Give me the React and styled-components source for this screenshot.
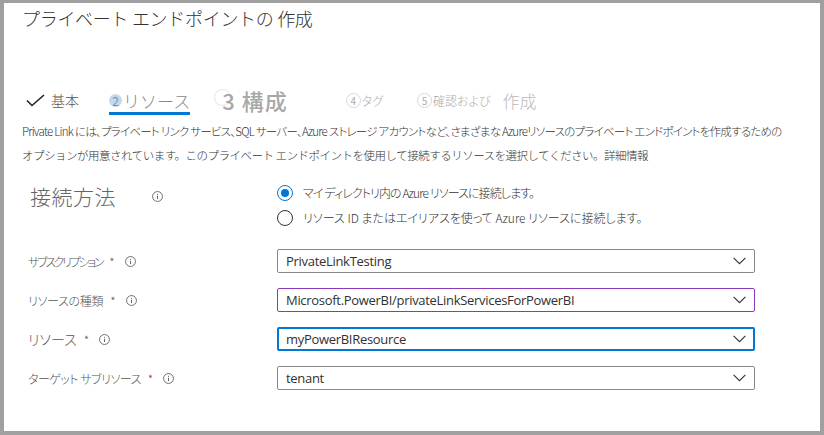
import React from "react";
import styled, { createGlobalStyle } from "styled-components";

const GlobalStyle = createGlobalStyle`
  html, body {
    margin: 0;
    padding: 0;
    background: #a0a0a0;
  }
  body {
    font-family: "Noto Sans CJK JP", "Noto Sans", sans-serif;
  }
`;

const STEPS_LATER = [
  { num: "4", label: "タグ", gapAfter: 34 },
  { num: "5", label: "確認および", gapAfter: 12 },
];

const FIELDS = [
  { label: "サブスクリプション", value: "PrivateLinkTesting", tone: "plain", spacing: -2.3 },
  { label: "リソースの種類", value: "Microsoft.PowerBI/privateLinkServicesForPowerBI", tone: "purple", spacing: -0.3 },
  { label: "リソース", value: "myPowerBIResource", tone: "focus", spacing: 0, size: 14 },
  { label: "ターゲット サブリソース", value: "tenant", tone: "plain", spacing: -0.5, redStar: true },
];

const InfoIcon = ({ size = 11 }) => (
  <svg width={size} height={size} viewBox="0 0 12 12">
    <circle cx="6" cy="6" r="5.4" fill="none" stroke="#555" strokeWidth="0.9" />
    <circle cx="6" cy="3.6" r="0.6" fill="#555" />
    <path d="M6 5.2 V8.8" stroke="#555" strokeWidth="1" />
  </svg>
);

const Chevron = () => (
  <svg width="13" height="8" viewBox="0 0 13 8">
    <path d="M0.6 0.8 L6.5 6.7 L12.4 0.8" fill="none" stroke="#333" strokeWidth="1.1" />
  </svg>
);

const App = () => {
  return (
    <>
      <GlobalStyle />
      <Frame>
        <Panel>
          <Title>プライベート エンドポイントの 作成</Title>

          <Steps>
            <Step>
              <svg width="19" height="13" viewBox="0 0 19 13">
                <path d="M1 6.5 L6 11.5 L18 1" fill="none" stroke="#222" strokeWidth="1.6" />
              </svg>
              <StepText>基本</StepText>
            </Step>
            <ActiveStep>
              <FilledNum>2</FilledNum>
              <StepText $color="#8a8a8a" $size={17}>リソース</StepText>
            </ActiveStep>
            <BigStep>
              <RingNum />
              <BigLabel>3 構成</BigLabel>
            </BigStep>
            {STEPS_LATER.map((s) => (
              <Step key={s.num} $gap={0} $after={s.gapAfter}>
                <RingSmall>{s.num}</RingSmall>
                <StepText $color="#aaa" $size={12} $palt>{s.label}</StepText>
              </Step>
            ))}
            <StepText $color="#bbb" $size={17}>作成</StepText>
          </Steps>

          <Description>
            <DescLine $palt $spacing={-0.75}>
              Private Link には、プライベート リンク サービス、SQL サーバー、Azure ストレージ アカウントなど、さまざまな Azureリソースのプライベート エンドポイントを作成するための
            </DescLine>
            <DescLine $spacing={-0.5}>
              オプションが用意されています。このプライベート エンドポイントを使用して接続するリソースを選択してください。詳細情報
            </DescLine>
          </Description>

          <MethodRow>
            <MethodLabel>
              <span>接続方法</span>
              <InfoIcon />
            </MethodLabel>
            <RadioGroup>
              <RadioOption $spacing={-0.9}>
                <Radio $checked />
                <span>マイ ディレクトリ内の Azure リソースに接続します。</span>
              </RadioOption>
              <RadioOption>
                <Radio />
                <span>リソース ID またはエイリアスを使って Azure リソースに接続します。</span>
              </RadioOption>
            </RadioGroup>
          </MethodRow>

          <Form>
            {FIELDS.map((f) => (
              <FieldRow key={f.label}>
                <FieldLabel>
                  <LabelText $spacing={f.spacing} $size={f.size}>{f.label}</LabelText>
                  <Star $red={f.redStar}>*</Star>
                  <InfoIcon />
                </FieldLabel>
                <Select $tone={f.tone}>
                  <span>{f.value}</span>
                  <Chevron />
                </Select>
              </FieldRow>
            ))}
          </Form>
        </Panel>
      </Frame>
    </>
  );
};

const Frame = styled.div`
  width: 824px;
  height: 435px;
  box-sizing: border-box;
  padding: 3px 4px 4px 4px;
  background: #a0a0a0;
`;

const Panel = styled.div`
  height: 100%;
  box-sizing: border-box;
  background: #fff;
  padding: 0 0 0 18px;
  overflow: hidden;
`;

const Title = styled.h1`
  margin: 0;
  font-size: 18px;
  font-weight: 300;
  line-height: 30px;
  color: #333;
  letter-spacing: -0.3px;
`;

const Steps = styled.div`
  display: flex;
  align-items: center;
  height: 30px;
  margin-top: 52px;
  padding-left: 4px;
`;

const Step = styled.div`
  display: flex;
  align-items: center;
  gap: ${(p) => (p.$gap ?? 6)}px;
  margin-right: ${(p) => (p.$after ?? 30)}px;
`;

const ActiveStep = styled.div`
  display: flex;
  align-items: center;
  height: 28px;
  box-sizing: border-box;
  padding-top: 1px;
  border-bottom: 3px solid #0078d4;
  margin-right: 24px;
  margin-top: 2px;
`;

const StepText = styled.span`
  font-size: ${(p) => p.$size || 14}px;
  font-weight: 300;
  color: ${(p) => p.$color || "#555"};
  white-space: nowrap;
  font-feature-settings: ${(p) => (p.$palt ? '"palt"' : "normal")};
`;

const FilledNum = styled.span`
  width: 13px;
  height: 13px;
  border-radius: 50%;
  background: #c3d9ef;
  color: #7f8fa0;
  font-size: 12px;
  line-height: 13px;
  text-align: center;
  margin-right: 1px;
`;

const BigStep = styled.div`
  display: flex;
  align-items: center;
  margin-right: 58px;
`;

const RingNum = styled.span`
  width: 15px;
  height: 15px;
  border-radius: 50%;
  border: 1px solid #e4e4e4;
  margin-top: -6px;
`;

const BigLabel = styled.span`
  margin-left: -9px;
  font-size: 22px;
  font-weight: 500;
  color: #a8a8a8;
  letter-spacing: 1px;
  white-space: nowrap;
`;

const RingSmall = styled.span`
  width: 13px;
  height: 13px;
  border-radius: 50%;
  border: 1px solid #d8d8d8;
  font-size: 10px;
  line-height: 13px;
  text-align: center;
  color: #aaa;
  margin-right: 1px;
`;

const Description = styled.div`
  margin-top: 4px;
  display: flex;
  flex-direction: column;
`;

const DescLine = styled.span`
  font-size: 11.5px;
  line-height: 24px;
  color: #333;
  font-weight: 300;
  letter-spacing: ${(p) => p.$spacing}px;
  white-space: nowrap;
  font-feature-settings: ${(p) => (p.$palt ? '"palt"' : "normal")};
`;

const MethodRow = styled.div`
  display: grid;
  grid-template-columns: 255px 1fr;
  margin-top: 13px;
`;

const MethodLabel = styled.div`
  display: flex;
  align-items: center;
  height: 32px;
  padding-left: 8px;
  gap: 36px;

  span {
    font-size: 21px;
    font-weight: 300;
    color: #666;
    letter-spacing: 0.5px;
  }
`;

const RadioGroup = styled.div`
  display: flex;
  flex-direction: column;
`;

const RadioOption = styled.label`
  display: flex;
  align-items: center;
  height: 25px;
  gap: 10px;
  font-size: 12px;
  font-weight: 300;
  color: #333;
  white-space: nowrap;
  font-feature-settings: "palt";
  letter-spacing: ${(p) => p.$spacing ?? 0}px;
`;

const Radio = styled.span`
  width: 16px;
  height: 16px;
  box-sizing: border-box;
  border-radius: 50%;
  border: 1px solid ${(p) => (p.$checked ? "#0078d4" : "#333")};
  display: flex;
  align-items: center;
  justify-content: center;

  &::after {
    content: "";
    width: 8px;
    height: 8px;
    border-radius: 50%;
    background: ${(p) => (p.$checked ? "#0078d4" : "transparent")};
  }
`;

const Form = styled.div`
  display: flex;
  flex-direction: column;
  gap: 15px;
  margin-top: 19px;
`;

const FieldRow = styled.div`
  display: grid;
  grid-template-columns: 255px 478px;
  align-items: center;
`;

const FieldLabel = styled.div`
  display: flex;
  align-items: center;
  padding-left: 6px;
  font-size: 12px;
  font-weight: 300;
  color: #555;
  white-space: nowrap;
  font-feature-settings: "palt";

  svg {
    margin-left: 10px;
  }
`;

const LabelText = styled.span`
  font-size: ${(p) => p.$size || 12}px;
  letter-spacing: ${(p) => p.$spacing}px;
`;

const Star = styled.span`
  margin-left: 7px;
  color: ${(p) => (p.$red ? "#a4262c" : "#555")};
`;

const toneBorder = {
  plain: "1px solid #8a8886",
  purple: "1px solid #8a3ab9",
  focus: "2px solid #0078d4",
};

const Select = styled.div`
  height: 24px;
  box-sizing: border-box;
  border: ${(p) => toneBorder[p.$tone]};
  border-radius: 2px;
  display: flex;
  align-items: center;
  justify-content: space-between;
  padding: 0 ${(p) => (p.$tone === "focus" ? 7 : 8)}px;
  font-family: "Open Sans", "Noto Sans", sans-serif;
  font-size: 13px;
  color: #323130;

  span {
    letter-spacing: -0.3px;
  }
`;

export default App;
